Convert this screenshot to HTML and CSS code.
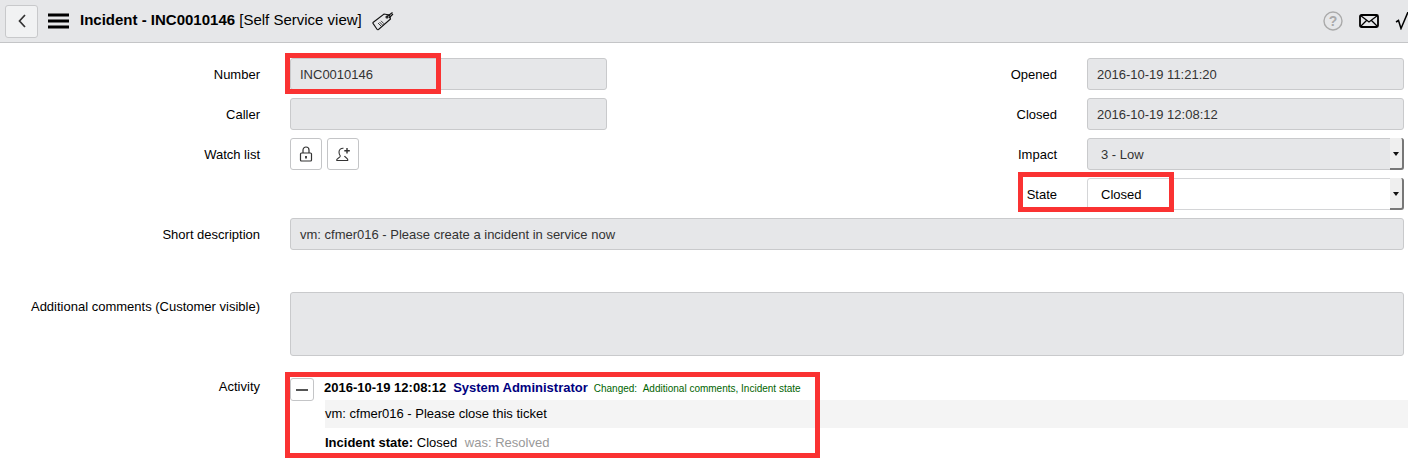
FILE: index.html
```html
<!DOCTYPE html>
<html lang="en">
<head>
<meta charset="utf-8">
<title>Incident - INC0010146</title>
<link rel="stylesheet" href="styles.css">
</head>
<body>
<header class="topbar">
  <button class="back" type="button" aria-label="Back">
    <svg width="10" height="16" viewBox="0 0 10 16"><path d="M8 2 2.500 8 8 14" fill="none" stroke="#333" stroke-width="1.700"/></svg>
  </button>
  <svg class="menu" width="21" height="16" viewBox="0 0 21 16"><path d="M0 2h21M0 8h21M0 14h21" stroke="#000" stroke-width="3"/></svg>
  <h1 class="title"><b>Incident - INC0010146</b> [Self Service view]</h1>
  <svg class="tag" width="22" height="20" viewBox="0 0 22 20"><g fill="none" stroke="#111" stroke-width="1.100"><path d="M1 11.500 12 3l5.500 1L18.500 8 6.500 18.500q-1 .5-1.500-.3L1.200 12.700q-.6-.7-.2-1.200z"/><circle cx="15" cy="6" r="1"/><path d="M15 5.500 20.500 1.500M17 7 21 3"/><path d="M6 12l3 3M7.500 11l3 3M9 9.800l3 3" stroke-width=".8"/></g></svg>
  <div class="topbar-right">
    <svg width="20" height="20" viewBox="0 0 20 20"><circle cx="10" cy="10" r="9" fill="none" stroke="#aaa" stroke-width="1.400"/><text x="10" y="15" text-anchor="middle" class="q">?</text></svg>
    <svg class="mail" width="20" height="14" viewBox="0 0 20 14"><g fill="none" stroke="#000"><rect x="1" y="1" width="18" height="12" rx="1.500" stroke-width="1.800"/><path d="M1.500 1.500 10 8l8.500-6.500M1.500 12.500 7.500 6.500M18.500 12.500l-6-6" stroke-width="1.300"/></g></svg>
    <svg class="check" width="14" height="18" viewBox="0 0 14 18"><path d="M1 10l2.500-1.500L6 16.500 13 0" fill="none" stroke="#000" stroke-width="1.500"/></svg>
  </div>
</header>
<main class="form">
  <label class="lbl">Number</label>
  <div class="field ro marked">INC0010146<span class="mark mark-number"></span></div>
  <label class="lbl">Opened</label>
  <div class="field ro">2016-10-19 11:21:20</div>

  <label class="lbl">Caller</label>
  <div class="field ro"></div>
  <label class="lbl">Closed</label>
  <div class="field ro">2016-10-19 12:08:12</div>

  <label class="lbl">Watch list</label>
  <div class="watch">
    <button class="iconbtn" type="button" aria-label="Unlock"><svg width="14" height="16" viewBox="0 0 14 16"><g fill="none" stroke="#333" stroke-width="1.200"><rect x="1.500" y="7" width="11" height="8" rx="1"/><path d="M4 7V4a3 3 0 0 1 6 0v3"/><path d="M7 10v2.500" stroke-width="1.800"/></g></svg></button>
    <button class="iconbtn" type="button" aria-label="Add me"><svg width="16" height="16" viewBox="0 0 16 16"><g fill="none" stroke="#333" stroke-width="1.100"><path d="M1.500 14.500h11.500M1.500 14.500c0-2.500 3.500-2.500 3.800-4.500C4.500 9 4 8 4 6c0-2.500 2-4 4.500-3.800M9.500 10c.5 1.500 3.500 2 3.500 4.500"/><path d="M12 2v5.500M9.300 4.700h5.500" stroke-width="1.400"/></g></svg></button>
  </div>
  <label class="lbl">Impact</label>
  <div class="field ro select">3 - Low<span class="arrow"></span></div>

  <div class="spacer"></div>
  <label class="lbl marked">State<span class="mark mark-state"></span></label>
  <div class="field select open">Closed<span class="arrow"></span></div>

  <label class="lbl">Short description</label>
  <div class="field ro wide">vm: cfmer016 - Please create a incident in service now</div>

  <label class="lbl lbl-comments">Additional comments (Customer visible)</label>
  <div class="field ro wide comments"></div>

  <label class="lbl lbl-activity">Activity</label>
  <section class="activity wide">
    <span class="mark mark-activity"></span>
    <button class="collapse" type="button" aria-label="Collapse"></button>
    <div class="entry">
      <div class="entry-head"><b class="time">2016-10-19 12:08:12</b><b class="user">System Administrator</b><span class="changed">Changed:&nbsp;&nbsp;<em>Additional comments, Incident state</em></span></div>
      <div class="comment">vm: cfmer016 - Please close this ticket</div>
      <div class="change"><b>Incident state:</b> Closed <span class="was">was: Resolved</span></div>
    </div>
  </section>
</main>
</body>
</html>
```
FILE: styles.css
```css
html, body { margin: 0; height: 461px; overflow: hidden; background: #fff; }
body { font: 13px/16px "Liberation Sans", Arial, sans-serif; color: #000; }
.topbar { height: 42px; background: #e6e7e9; border-bottom: 1px solid #c4c5c7; display: flex; align-items: center; padding-left: 5px; }
.back { width: 33px; height: 33px; margin: 0; padding: 0; border: 1px solid #c8c9cb; border-radius: 3px; background: #f1f2f3; display: flex; align-items: center; justify-content: center; }
.menu { margin-left: 10px; }
.title { margin: 0 0 3px 11px; font-size: 15px; font-weight: 400; line-height: 18px; white-space: nowrap; }
.tag { margin-left: 10px; }
.topbar-right { margin-left: auto; display: flex; align-items: center; width: 85px; flex: none; gap: 16px; }
.topbar-right svg { flex: none; }
.q { font: 700 14px "Liberation Sans", sans-serif; fill: #aaa; }
.form { display: grid; grid-template-columns: 260px 317px 420px 317px; column-gap: 30px; row-gap: 8px; padding-top: 15px; }
.lbl { text-align: right; height: 32px; line-height: 34px; white-space: nowrap; }
.field { box-sizing: border-box; height: 32px; line-height: 32px; padding: 0 9px; border: 1px solid #c9cacc; border-radius: 3px; position: relative; color: #333; }
.ro { background: #e6e7e9; }
.form > .wide { grid-column: 2 / span 3; }
.select { padding-left: 13px; padding-right: 20px; }
.open { background: #fff; color: #000; border-color: #d4d5d7; }
.arrow { position: absolute; right: -1px; top: -1px; bottom: -1px; width: 14px; background: #efefef; border-right: 2px solid #777; border-bottom: 2px solid #777; box-sizing: border-box; border-radius: 0 3px 3px 0; }
.arrow::after { content: ""; position: absolute; left: 3px; top: 14px; border: 3.500px solid transparent; border-top: 4px solid #111; border-bottom: 0; }
.watch { display: flex; gap: 5px; }
.iconbtn { box-sizing: border-box; width: 32px; height: 32px; padding: 0; background: #fff; border: 1px solid #c4c5c7; border-radius: 3px; display: flex; align-items: center; justify-content: center; }
.spacer { grid-column: 1 / span 2; }
.marked { position: relative; }
.mark { position: absolute; border: 5px solid #fa3232; box-sizing: border-box; pointer-events: none; z-index: 2; }
.mark-number { left: -6px; top: -6px; width: 156px; height: 41px; }
.mark-state { top: -6px; right: -117px; width: 156px; height: 40px; }
.mark-activity { left: -5px; top: -5px; width: 535px; height: 86px; }
.lbl-comments { margin-top: 34px; line-height: 30px; }
.form > .comments { height: 64px; margin-top: 34px; }
.lbl-activity { line-height: 20px; margin-top: 13px; }
.activity { position: relative; display: flex; margin-top: 13px; height: 80px; }
.collapse { box-sizing: border-box; width: 24px; height: 23px; padding: 0; flex: none; background: #fff; border: 1px solid #c4c5c7; border-radius: 3px; position: relative; margin-top: 1px; }
.collapse::after { content: ""; position: absolute; left: 5px; right: 5px; top: 10px; height: 2px; background: #555; }
.entry { margin: 0 -4px 0 10px; flex: 1; }
.entry-head { height: 23px; line-height: 22px; white-space: nowrap; }
.time, .user { font-weight: 700; }
.user { color: #000080; margin-left: 7px; }
.changed { font-size: 10px; color: #006400; margin-left: 6px; }
.changed em { font-style: normal; }
.comment { background: #f4f4f4; height: 28px; line-height: 27px; margin-left: 1px; }
.change { margin: 7px 0 0 1px; line-height: 16px; }
.was { color: #999; margin-left: 4px; }
```
